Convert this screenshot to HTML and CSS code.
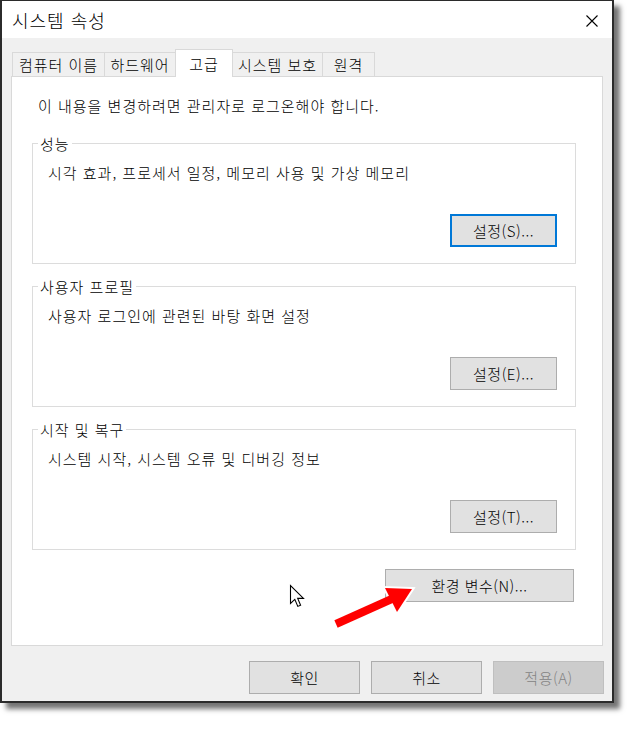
FILE: index.html
```html
<!DOCTYPE html>
<html lang="ko">
<head>
<meta charset="utf-8">
<title>시스템 속성</title>
<link rel="stylesheet" href="styles.css">
</head>
<body>
<div class="window">
  <div class="titlebar">
    <span class="title">시스템 속성</span>
    <svg class="close" width="12" height="12" viewBox="0 0 12 12"><path d="M0.5 0.5 L11.5 11.5 M11.5 0.5 L0.5 11.5" stroke="#000" stroke-width="1.1" fill="none"/></svg>
  </div>
  <div class="content">
    <div class="tabs">
      <div class="tab t1">컴퓨터 이름</div>
      <div class="tab t2">하드웨어</div>
      <div class="tab t3 selected">고급</div>
      <div class="tab t4">시스템 보호</div>
      <div class="tab t5">원격</div>
    </div>
    <div class="panel">
      <p class="note">이 내용을 변경하려면 관리자로 로그온해야 합니다.</p>
      <div class="group">
        <span class="group-label">성능</span>
        <p class="desc">시각 효과, 프로세서 일정, 메모리 사용 및 가상 메모리</p>
        <div class="btn-row"><button class="btn btn-set focused">설정(S)...</button></div>
      </div>
      <div class="group">
        <span class="group-label">사용자 프로필</span>
        <p class="desc">사용자 로그인에 관련된 바탕 화면 설정</p>
        <div class="btn-row"><button class="btn btn-set">설정(E)...</button></div>
      </div>
      <div class="group">
        <span class="group-label">시작 및 복구</span>
        <p class="desc">시스템 시작, 시스템 오류 및 디버깅 정보</p>
        <div class="btn-row"><button class="btn btn-set">설정(T)...</button></div>
      </div>
      <div class="env-row"><button class="btn btn-env">환경 변수(N)...</button></div>
    </div>
    <div class="footer">
      <button class="btn btn-foot">확인</button>
      <button class="btn btn-foot">취소</button>
      <button class="btn btn-foot disabled">적용(A)</button>
    </div>
  </div>
</div>
<svg class="cursor" width="18" height="26" viewBox="0 0 18 26"><path d="M1.5 1.5 L1.5 19.5 L5.8 15.4 L8.8 22.4 L11.6 21.2 L8.7 14.4 L14.5 14.4 Z" fill="#fff" stroke="#000" stroke-width="1.1" stroke-linejoin="miter"/></svg>
<svg class="red-arrow" width="100" height="60" viewBox="0 0 100 60">
  <polygon points="92,14 65,13 77,37" fill="#fff" stroke="#fff" stroke-width="4" stroke-linejoin="miter"/>
  <line x1="16" y1="49" x2="74" y2="23" stroke="#ff0000" stroke-width="8"/>
  <polygon points="92,14 65,13 77,37" fill="#ff0000"/>
</svg>
</body>
</html>
```

FILE: styles.css
```css
html, body {
  margin: 0;
  padding: 0;
  background: #ffffff;
}
body {
  font-family: "Noto Sans CJK KR", "Noto Sans", sans-serif;
  font-size: 15px;
  font-weight: 300;
  letter-spacing: 1px;
  color: #000;
  position: relative;
  width: 627px;
  height: 731px;
  overflow: hidden;
}
.window {
  box-sizing: border-box;
  width: 614px;
  height: 703px;
  border-style: solid;
  border-color: #2b2b2b;
  border-width: 1px 2px 2px 2px;
  background: #f0f0f0;
  box-shadow: 6px 6px 5px rgba(0, 0, 0, 0.55);
  display: flex;
  flex-direction: column;
}
.titlebar {
  height: 37px;
  background: #ffffff;
  display: flex;
  align-items: center;
  justify-content: space-between;
  padding: 0 14px 0 10px;
  flex: none;
}
.title {
  font-size: 18px;
  line-height: 24px;
  margin-top: 1px;
  letter-spacing: 1px;
}
.close {
  display: block;
  margin-top: 2px;
}
.content {
  padding: 11px 0 0 9px;
  display: flex;
  flex-direction: column;
}
.tabs {
  display: flex;
  align-items: flex-end;
  height: 27px;
  padding-left: 1px;
}
.tab {
  box-sizing: border-box;
  height: 24px;
  border: 1px solid #d9d9d9;
  border-bottom: none;
  background: #f0f0f0;
  text-align: center;
  line-height: 23px;
  margin-right: -1px;
}
.tab.t1 { width: 93px; }
.tab.t2 { width: 72px; }
.tab.t3 { width: 58px; }
.tab.t4 { width: 91px; }
.tab.t5 { width: 53px; }
.tab.selected {
  height: 28px;
  margin-bottom: -1px;
  background: #ffffff;
  position: relative;
  z-index: 1;
  line-height: 28px;
}
.panel {
  box-sizing: border-box;
  width: 592px;
  height: 570px;
  background: #ffffff;
  border: 1px solid #d9d9d9;
  padding: 0 26px 0 20px;
}
.note {
  margin: 19px 0 0 6px;
  line-height: 20px;
}
.group {
  border: 1px solid #dcdcdc;
  margin-top: 27px;
  padding: 0 18px 16px 15px;
}
.group + .group {
  margin-top: 22px;
}
.group-label {
  display: table;
  margin: -10px 0 0 -10px;
  padding: 0 2px;
  background: #ffffff;
  line-height: 20px;
}
.desc {
  margin: 9px 0 0 0;
  line-height: 20px;
}
.btn-row {
  display: flex;
  justify-content: flex-end;
  margin-top: 31px;
}
.btn {
  box-sizing: border-box;
  font-family: inherit;
  font-size: 15px;
  font-weight: 300;
  letter-spacing: 0.5px;
  color: #000;
  background: #e1e1e1;
  border: 1px solid #adadad;
  height: 33px;
  padding: 0;
  margin: 0;
  line-height: 20px;
}
.btn-set {
  width: 107px;
}
.btn.focused {
  border: 2px solid #0078d7;
}
.env-row {
  display: flex;
  justify-content: flex-end;
  margin-top: 19px;
  padding-right: 2px;
}
.btn-env {
  width: 189px;
}
.footer {
  display: flex;
  justify-content: flex-end;
  gap: 11px;
  padding: 15px 8px 0 0;
}
.btn-foot {
  width: 111px;
}
.btn.disabled {
  background: #cccccc;
  border-color: #bfbfbf;
  color: #838383;
}
.cursor {
  position: absolute;
  left: 289px;
  top: 584px;
}
.red-arrow {
  position: absolute;
  left: 320px;
  top: 575px;
}
```
